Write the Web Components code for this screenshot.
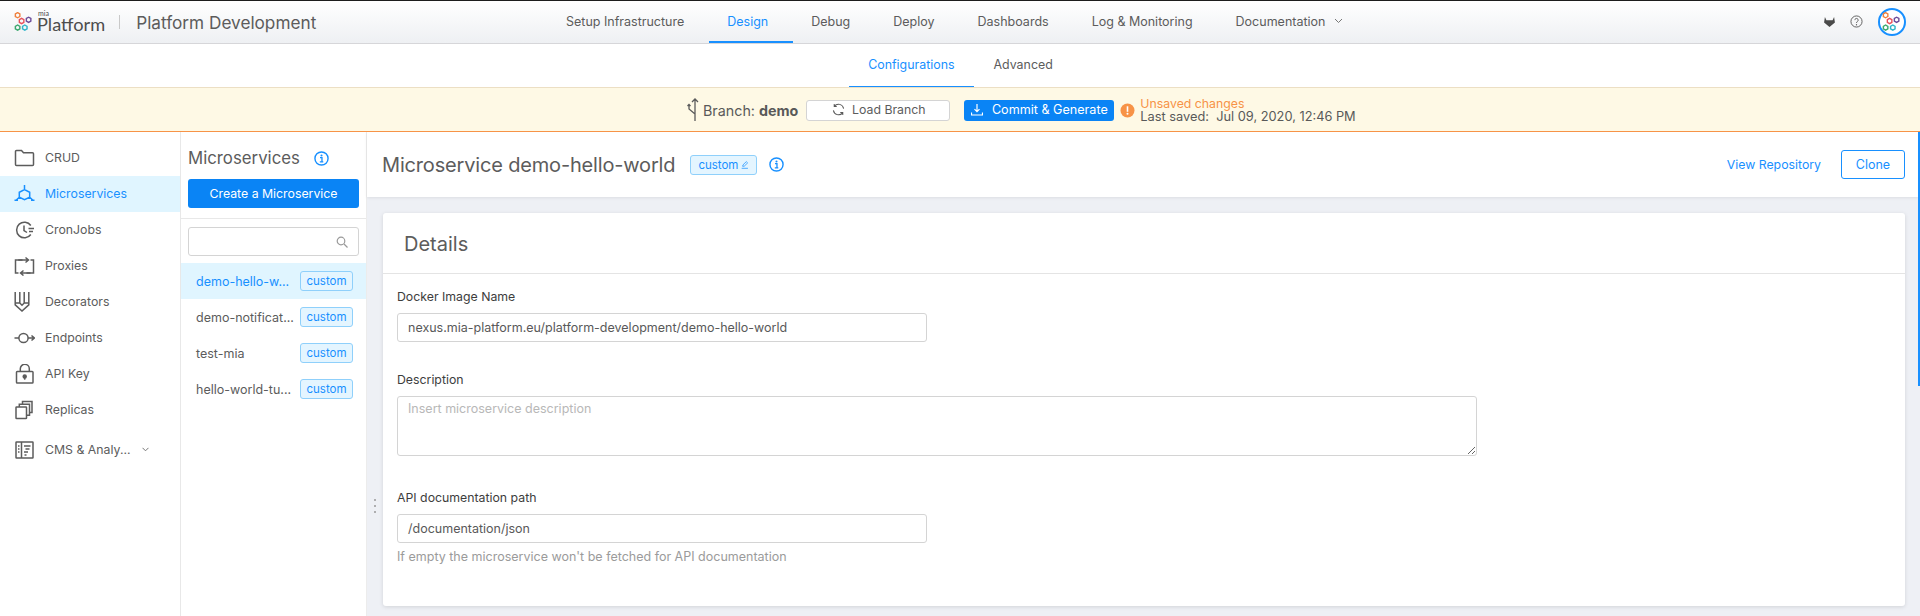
<!DOCTYPE html>
<html lang="en"><head><meta charset="utf-8"><title>Platform Development</title>
<style>
html,body{margin:0;height:616px;overflow:hidden;background:#fff;font-family:Inter,"Liberation Sans",sans-serif;color:#595959;font-size:12.3px}
body{display:flex;flex-direction:column}
</style></head><body>
<app-navbar></app-navbar>
<sub-tabs></sub-tabs>
<branch-banner></branch-banner>
<app-body>
  <side-menu></side-menu>
  <service-list></service-list>
  <detail-pane></detail-pane>
</app-body>
<script>
const hex=(cx,cy,r,c,w=1.4)=>{let p=[];for(let i=0;i<6;i++){const a=Math.PI/3*i+Math.PI/6;p.push((cx+r*Math.cos(a)).toFixed(2)+','+(cy+r*Math.sin(a)).toFixed(2))}return `<polygon points="${p.join(' ')}" fill="none" stroke="${c}" stroke-width="${w}"/>`};
const mark=(s)=>`<svg width="${s}" height="${s}" viewBox="0 0 20 20">${hex(3.6,3.2,2.6,'#f0803c')}${hex(7.6,9,2.6,'#e8505b')}${hex(14.6,7.8,2.6,'#6b4c9a')}${hex(3.6,15.6,2.6,'#3aa76d')}${hex(10.8,15.6,2.6,'#2fb5c9')}</svg>`;
const info=(s=15)=>`<svg width="${s}" height="${s}" viewBox="0 0 16 16" fill="none"><circle cx="8" cy="8" r="7" stroke="#1890ff" stroke-width="1.5"/><circle cx="8" cy="4.7" r="1.1" fill="#1890ff"/><path d="M6.4 7h2.100v4.300M6.200 11.500h3.700" stroke="#1890ff" stroke-width="1.400"/></svg>`;
const I={
folder:`<path d="M1 3.500a1 1 0 0 1 1-1h5l2 2.300h9a1 1 0 0 1 1 1v10.700a1 1 0 0 1-1 1H2a1 1 0 0 1-1-1z"/>`,
micro:`<path d="M10 1v4.500M4.800 8.300v5L10 15.700l5.200-2.400v-5L10 5.500zM4.800 13.300 1.800 16M15.200 13.300l3 2.700M0 16.200h3.500M16.500 16.200H20"/>`,
cron:`<path d="M16.300 5.500A7.800 7.800 0 1 0 16.300 14.500"/><path d="M9.500 5.500V10.500l3 2M14 8.500h5.500M14.500 11.500h4"/>`,
proxy:`<path d="M8 4H1v13h3M12 17h7V4h-3"/><path d="M11 1.500l3 2.500-3 2.500M3.800 4H14M9 14.500 6 17l3 2.500M6 17h10"/>`,
deco:`<path d="M.700 0v12.800L7.500 19l6.800-6.200V0M5.300 0v11L7.500 13.200 9.700 11V0M.700 11 5.300 11M14.300 11 9.700 11"/>`,
end:`<path d="M0 10H4.500M13.500 10h6M17 7.500l2.800 2.500-2.800 2.500"/><circle cx="9" cy="10" r="4.600"/>`,
key:`<rect x="2" y="7.500" width="16.500" height="11.500" rx=".8"/><path d="M5.800 7.500V4.800a4.500 4.500 0 0 1 9 0v2.700"/><circle cx="10.200" cy="12.400" r="1.500" fill="currentColor"/><path d="M10.200 13.500v2.200"/>`,
rep:`<rect x="1.500" y="7" width="10.500" height="11.500" rx=".6"/><path d="M4.800 7V4.200h10.200v11H12M8 4.200V1.500h9.500v11h-2.500"/>`,
cms:`<rect x="1.500" y="2" width="17" height="16" rx=".5"/><path d="M7 2v16M3.500 6h1.500M3.500 9h1.500M3.500 12h1.500M9.500 6h6.500M11 9h4M9.500 12h4M10 15h2"/>`
};
const def=(n,html)=>customElements.define(n,class extends HTMLElement{constructor(){super();this.attachShadow({mode:'open'}).innerHTML=typeof html==='function'?html(this):html}});

def('nav-tab',`<style>:host{display:flex;align-items:center;height:100%;padding:0 25px 2px 18px;position:relative;box-sizing:border-box;white-space:nowrap;font-size:12.500px;color:#5c5c5c}
:host([active]){color:#1890ff}:host([active])::after{content:"";position:absolute;left:0;right:0;bottom:0;height:2px;background:#1890ff}</style><slot></slot>`);

def('app-navbar',()=>`<style>:host{display:flex;align-items:stretch;height:44px;box-sizing:border-box;border-top:1px solid #1d1d1d;border-bottom:1px solid #d6d6d9;background:linear-gradient(#fff,#eef0f3);flex:none}
.brand{width:548px;flex:none;display:flex;align-items:center;box-sizing:border-box;padding-left:14px}
.lg{display:flex;flex-direction:column;margin-left:3px;line-height:1;color:#4d4d4d}
.mia{font:400 7px/6px Lato,sans-serif;margin-left:1px;height:6px}
.pf{font:400 18.200px/17px Lato,sans-serif;height:18px}
.sep{width:1px;height:14px;background:#c9c9c9;margin:0 16px 0 14px}
.ttl{font-size:17.200px;color:#5c5c5c}
.tabs{display:flex;height:100%}
.r{margin-left:auto;display:flex;align-items:center;padding-right:14.500px;padding-bottom:1px}
.ava{width:28px;height:28px;box-sizing:border-box;border:2px solid #1890ff;border-radius:50%;display:flex;align-items:center;justify-content:center;background:#fff;margin-left:14.500px}
.h{margin-left:15px}
.chev{margin-left:9px}
</style>
<div class="brand">${mark(20)}<div class="lg"><span class="mia">mia</span><span class="pf">Platform</span></div><div class="sep"></div><span class="ttl">Platform Development</span></div>
<div class="tabs"><nav-tab>Setup Infrastructure</nav-tab><nav-tab active>Design</nav-tab><nav-tab>Debug</nav-tab><nav-tab>Deploy</nav-tab><nav-tab>Dashboards</nav-tab><nav-tab>Log &amp; Monitoring</nav-tab><nav-tab>Documentation<svg class="chev" width="9" height="6" viewBox="0 0 9 6" fill="none"><path d="M1 1l3.500 3.500L8 1" stroke="#777" stroke-width="1"/></svg></nav-tab></div>
<div class="r"><svg width="11" height="10" viewBox="0 0 13 12"><path d="M1 0l1.800 4h7.400L12 0l1 6.500L6.500 12 0 6.500z" fill="#4a4a4a"/></svg>
<svg class="h" width="13" height="13" viewBox="0 0 14 14" fill="none"><circle cx="7" cy="7" r="6" stroke="#595959"/><path d="M5.200 5.500a1.800 1.800 0 1 1 2.800 1.500c-.7.500-1 .8-1 1.600" stroke="#595959"/><circle cx="7" cy="10.500" r=".7" fill="#595959"/></svg>
<div class="ava">${mark(20)}</div></div>`);

def('sub-tabs',`<style>:host{display:flex;justify-content:center;height:43px;flex:none;background:#fff}
.w{display:flex;margin-left:0}
.t{display:flex;align-items:center;padding:0 19.500px 2px;font-size:12.400px;position:relative;color:#5c5c5c}
.a{color:#1890ff;margin-left:1px}.a::after{content:"";position:absolute;left:0;right:0;bottom:0;height:1px;background:#1890ff}
</style><div class="w"><div class="t a">Configurations</div><div class="t">Advanced</div></div>`);

def('branch-banner',`<style>:host{display:flex;height:45px;box-sizing:border-box;flex:none;background:#fef9e5;border-top:1px solid #ecdfc4;border-bottom:1px solid #f79347;align-items:center;padding-left:687px;padding-top:1px}
.b{font-size:14.300px;margin-left:4px;color:#595959;margin-right:8px;white-space:nowrap}.b b{font-weight:700}
.btn{height:21px;box-sizing:border-box;border-radius:3px;display:flex;align-items:center;justify-content:center;white-space:nowrap;padding-bottom:1px}
.l{width:144px;background:#fff;border:1px solid #d4d4d4;color:#5c5c5c;gap:7px;font-size:12.300px;padding-left:1px}
.c{width:150px;background:#0a84f5;color:#fff;margin-left:14px;gap:9px;font-size:12.600px}
.al{margin-left:6px}.m{margin-left:5px;line-height:13.500px;font-size:12.800px;white-space:nowrap}.u{color:#f79347;font-size:12.300px}
</style><svg width="12" height="24" viewBox="0 0 12 24" fill="none" stroke="#5a5a5a" stroke-width="1.300"><path d="M8 23V1M5 4l3-3 3 3M8 16 2 11V7M.500 8 2 6.500 3.500 8"/></svg>
<span class="b">Branch: <b>demo</b></span>
<div class="btn l"><svg width="13" height="13" viewBox="0 0 14 14" fill="none" stroke="#595959" stroke-width="1.100"><path d="M12.500 6A5.600 5.600 0 0 0 2.600 3.400M1.500 8a5.600 5.600 0 0 0 9.900 2.600M2.400 1v2.700h2.700M11.600 13v-2.700H8.900"/></svg>Load Branch</div>
<div class="btn c"><svg width="12" height="13" viewBox="0 0 12 13" fill="none" stroke="#fff" stroke-width="1.200"><path d="M6 1v7.500M3.500 6.200 6 8.700l2.500-2.500M.500 9.500v2.500h11V9.500"/></svg>Commit &amp; Generate</div>
<svg class="al" width="15" height="15" viewBox="0 0 15 15"><circle cx="7.500" cy="7.500" r="7" fill="#f79347"/><rect x="6.700" y="3.300" width="1.600" height="5.500" fill="#fff"/><circle cx="7.500" cy="10.800" r="1" fill="#fff"/></svg>
<div class="m"><div class="u">Unsaved changes</div><div>Last saved: &nbsp;Jul 09, 2020, 12:46 PM</div></div>`);

def('app-body',`<style>:host{display:grid;grid-template-columns:181px 185px 1fr;flex:1;min-height:0;overflow:hidden}</style><slot></slot>`);

def('side-item',(h)=>`<style>:host{display:flex;align-items:center;height:36px;box-sizing:border-box;padding:0 0 1px 14px;gap:10px;font-size:12.300px;color:#5c5c5c;white-space:nowrap}
:host([active]){background:#e0f5ff;color:#1890ff}svg{flex:none;color:inherit}</style>
<svg width="21" height="20" viewBox="0 0 20 20" fill="none" stroke="currentColor" stroke-width="1.500">${I[h.getAttribute('icon')]}</svg><slot></slot>`);

def('side-menu',`<style>:host{display:block;border-right:1px solid #e8e8e8;padding-top:8px;box-sizing:border-box}
.x{margin-top:4px}</style>
<side-item icon="folder">CRUD</side-item><side-item icon="micro" active>Microservices</side-item><side-item icon="cron">CronJobs</side-item><side-item icon="proxy">Proxies</side-item><side-item icon="deco">Decorators</side-item><side-item icon="end">Endpoints</side-item><side-item icon="key">API Key</side-item><side-item icon="rep">Replicas</side-item>
<side-item icon="cms" class="x">CMS &amp; Analy...<svg width="7" height="5" viewBox="0 0 7 5" fill="none" style="margin-left:1px"><path d="M.5.800 3.500 3.800 6.500.800" stroke="#777"/></svg></side-item>`);

def('custom-tag',`<style>:host{display:inline-flex;align-items:center;justify-content:center;box-sizing:border-box;height:20px;padding:0 7px;border:1px solid #8fd0fb;border-radius:3px;background:#e4f5ff;color:#1890ff;font-size:11.500px;gap:3px;white-space:nowrap}</style><slot></slot>`);

def('service-row',`<style>:host{display:flex;align-items:center;height:36px;padding:0 13px 0 15px;color:#5c5c5c;font-size:12.500px;justify-content:space-between}
:host([active]){background:#e0f5ff;color:#1890ff}custom-tag{width:53px;flex:none}
.t{white-space:nowrap}</style><span class="t"><slot></slot></span><custom-tag>custom</custom-tag>`);

def('service-list',()=>`<style>:host{display:block;box-sizing:border-box}
.h{display:flex;align-items:center;height:47px;padding:5px 7px 0;font-size:16.800px;color:#5c5c5c;gap:14px;box-sizing:border-box}
.cb{margin:0 7px;height:29px;border-radius:3px;background:#0a84f5;color:#fff;display:flex;align-items:center;justify-content:center;font-size:12.300px}
.hr{height:1px;background:#e8e8e8;margin-top:10px}
.s{margin:8px 7px 7px;height:29px;box-sizing:border-box;border:1px solid #d4d4d4;border-radius:3px;display:flex;align-items:center;justify-content:flex-end;padding-right:10px}
</style><div class="h">Microservices ${info(15)}</div><div class="cb">Create a Microservice</div><div class="hr"></div>
<div class="s"><svg width="12" height="12" viewBox="0 0 12 12" fill="none" stroke="#9a9a9a" stroke-width="1.200"><circle cx="5" cy="5" r="3.800"/><path d="M8 8l3.500 3.500"/></svg></div>
<service-row active>demo-hello-w...</service-row><service-row>demo-notificat...</service-row><service-row>test-mia</service-row><service-row>hello-world-tu...</service-row>`);

def('form-field',`<style>:host{display:block;color:#3d3d3d;font-size:12.300px}.l{height:16px;line-height:16px}</style><div class="l"><slot name="label"></slot></div><slot></slot>`);

def('text-box',`<style>:host{display:flex;align-items:center;box-sizing:border-box;height:29px;border:1px solid #d4d4d4;border-radius:3px;padding:0 10px;font-size:12.500px;color:#595959;background:#fff;white-space:nowrap}
:host([area]){display:block;height:60px;padding-top:4px;line-height:16px;color:#b8b8b8;resize:both;overflow:auto}</style><slot></slot>`);

def('detail-pane',()=>`<style>:host{display:flex;flex-direction:column;background:#eef0f5;min-height:0;border-left:1px solid #ececec;position:relative}
.head{flex:none;height:65px;background:#fff;box-shadow:0 1px 3px rgba(0,0,0,.08);display:flex;align-items:center;padding:0 15px;position:relative;box-sizing:border-box;margin-right:2px}
.t{font-size:20px;color:#5c5c5c;white-space:nowrap;letter-spacing:-.17px}
custom-tag{margin-left:15px;width:67px}
.i{margin-left:12px;display:flex}
.v{margin-left:auto;color:#1890ff;font-size:12.300px;padding-bottom:1px}
.cl{margin-left:20px;margin-right:-2px;width:64px;height:29px;border:1px solid #1890ff;border-radius:3px;box-sizing:border-box;color:#1890ff;display:flex;align-items:center;justify-content:center;padding-bottom:1px;font-size:12.500px}
.wrap{flex:1;padding:16px 15px 10px 16px;display:flex;min-height:0}
.card{flex:1;background:#fff;border-radius:3px;box-shadow:0 1px 4px rgba(0,0,0,.12);display:flex;flex-direction:column}
.ch{height:61px;flex:none;border-bottom:1px solid #e4e4e4;display:flex;align-items:center;padding:2px 0 0 21px;font-size:20px;color:#5c5c5c;box-sizing:border-box}
.cb{padding:15px 14px 0}
.in{width:530px;margin-top:8px}
.ta{width:1080px;margin-top:8px}
.help{color:#9b9b9b;font-size:12.500px;margin-top:6px}
.f2{margin-top:30px}.f3{margin-top:34px}
.sb{position:absolute;right:0;top:0;width:2px;height:254px;background:#1890ff}
.dots{position:absolute;left:7px;top:367px;width:2px;display:flex;flex-direction:column;gap:4px}
.dots i{width:2px;height:2px;border-radius:50%;background:#999}
</style><div class="head"><span class="t">Microservice demo-hello-world</span><custom-tag>custom <svg width="12" height="12" viewBox="0 0 12 12" fill="none" stroke="#1890ff" stroke-width="1.100"><path d="M2.500 8 3 5.800 8 .9l2 2L5 7.700zM1 11h9.500"/></svg></custom-tag><span class="i">${info(15)}</span><span class="v">View Repository</span><div class="cl">Clone</div></div>
<div class="wrap"><div class="card"><div class="ch">Details</div><div class="cb">
<form-field><span slot="label">Docker Image Name</span><text-box class="in">nexus.mia-platform.eu/platform-development/demo-hello-world</text-box></form-field>
<form-field class="f2"><span slot="label">Description</span><text-box area class="ta">Insert microservice description</text-box></form-field>
<form-field class="f3"><span slot="label">API documentation path</span><text-box class="in">/documentation/json</text-box></form-field>
<div class="help">If empty the microservice won't be fetched for API documentation</div>
</div></div></div><div class="sb"></div><div class="dots"><i></i><i></i><i></i></div>`);
</script>
</body></html>
